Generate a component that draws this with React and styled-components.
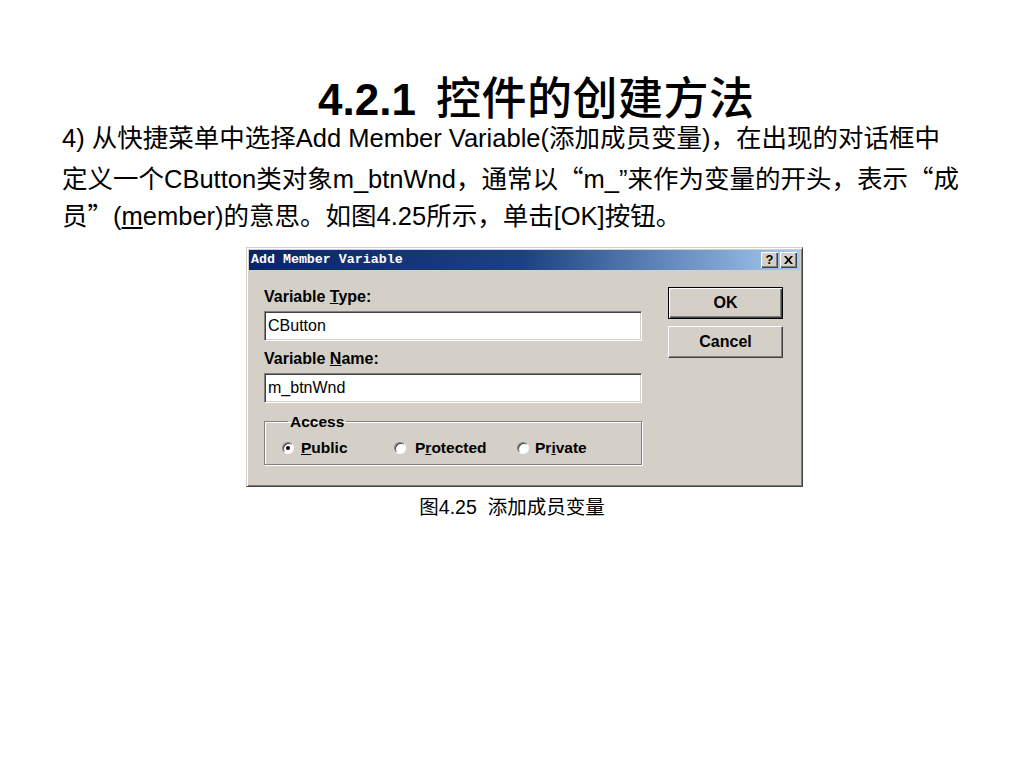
import React from 'react'
import styled, { createGlobalStyle } from 'styled-components'

const GlobalStyle = createGlobalStyle`
  html, body {
    margin: 0;
    background: #fff;
  }
  body {
    font-family: 'Liberation Sans', Arial, 'Noto Sans CJK SC', sans-serif;
    color: #000;
  }
`

const Page = styled.div`
  width: 1024px;
  height: 768px;
  padding-top: 72px;
  box-sizing: border-box;
  overflow: hidden;
`

const Title = styled.h1`
  margin: 0;
  padding-left: 318px;
  height: 48px;
  font-size: 44px;
  line-height: 48px;
  font-weight: 700;
  white-space: nowrap;
`

const TitleCjk = styled.span`
  font-family: 'Noto Sans CJK SC', sans-serif;
  font-size: 45px;
  line-height: 48px;
  font-weight: 500;
  margin-left: 20px;
  letter-spacing: 0.5px;
`

const Text = styled.div`
  padding-left: 62px;
  font-size: 25.5px;
  line-height: 37.5px;
  white-space: nowrap;
`

const Line = styled.div`
  height: 37.5px;
`

// full-width quotes, as the CJK font draws them
const Q = styled.span`
  font-family: 'Noto Sans CJK SC', sans-serif;
`

const Figure = styled.div`
  margin: 14px 0 0 246px;
  width: 557px;
`

const Window = styled.div`
  width: 557px;
  height: 240px;
  box-sizing: border-box;
  background: #d4d0c8;
  border: 1px solid;
  border-color: #d4d0c8 #404040 #404040 #d4d0c8;
  box-shadow: inset 1px 1px #fff, inset -1px -1px #808080;
  padding: 2px;
  display: flex;
  flex-direction: column;
`

const TitleBar = styled.div`
  height: 20px;
  flex-shrink: 0;
  background: linear-gradient(90deg, #0a246a 0%, #1c4283 50%, #a6caf0 100%);
  display: flex;
  align-items: center;
  justify-content: space-between;
  padding: 0 3px 0 2px;
`

const Caption = styled.span`
  font-family: 'Liberation Mono', 'DejaVu Sans Mono', monospace;
  font-weight: 700;
  font-size: 13.3px;
  color: #fff;
`

const CaptionButtons = styled.div`
  display: flex;
  gap: 2px;
`

const CapButton = styled.div`
  width: 17px;
  height: 16px;
  box-sizing: border-box;
  background: #d4d0c8;
  box-shadow: inset 1px 1px #fff, inset -1px -1px #404040, inset -2px -2px #808080;
  display: flex;
  align-items: center;
  justify-content: center;
  font: bold 13px/1 'Liberation Sans', sans-serif;
  color: #000;
`

const Body = styled.div`
  flex: 1;
  display: flex;
  gap: 26px;
  padding: 17px 0 0 15px;
`

const Form = styled.div`
  width: 378px;
  display: flex;
  flex-direction: column;
`

const Label = styled.div`
  font: bold 16px/18px 'Liberation Sans', sans-serif;
  margin-top: ${p => p.$gap || 0}px;
`

const Edit = styled.div`
  margin-top: 5px;
  height: 30px;
  box-sizing: border-box;
  background: #fff;
  border: 1px solid;
  border-color: #808080 #fff #fff #808080;
  box-shadow: inset 1px 1px #404040, inset -1px -1px #d4d0c8;
  padding-left: 3px;
  display: flex;
  align-items: center;
  font: 16px 'Liberation Sans', sans-serif;
`

const Group = styled.fieldset`
  margin: 11px 0 0;
  padding: 10px 0 8px 17px;
  min-width: 0;
  border: 1px solid #808080;
  box-shadow: 1px 1px #fff, inset 1px 1px #fff;
`

const Legend = styled.legend`
  margin-left: 6px;
  padding: 0 2px;
  font: bold 15.5px/16px 'Liberation Sans', sans-serif;
`

const RadioRow = styled.div`
  display: grid;
  grid-template-columns: 112px 123px auto;
  align-items: center;
  height: 16px;
`

const RadioItem = styled.label`
  display: flex;
  align-items: center;
  gap: ${p => p.$gap}px;
  font: bold 15.5px/16px 'Liberation Sans', sans-serif;
`

const Dot = styled.span`
  width: 12px;
  height: 12px;
  box-sizing: border-box;
  border-radius: 50%;
  background: #fff;
  border: 1px solid;
  border-color: #808080 #fff #fff #808080;
  box-shadow: inset 1px 1px #404040;
  display: flex;
  align-items: center;
  justify-content: center;

  &::after {
    content: '';
    width: 4px;
    height: 4px;
    border-radius: 50%;
    background: ${p => (p.$on ? '#000' : 'transparent')};
  }
`

const Buttons = styled.div`
  display: flex;
  flex-direction: column;
  gap: 7px;
`

const Button = styled.div`
  width: 115px;
  height: 32px;
  box-sizing: border-box;
  background: #d4d0c8;
  border: 1px solid;
  border-color: ${p => (p.$default ? '#000' : '#fff #404040 #404040 #fff')};
  box-shadow: ${p => (p.$default
    ? 'inset 1px 1px #fff, inset -1px -1px #404040, inset -2px -2px #808080'
    : 'inset -1px -1px #808080')};
  display: flex;
  align-items: center;
  justify-content: center;
  font: bold 16px 'Liberation Sans', sans-serif;
`

const FigCaption = styled.div`
  margin-top: 9px;
  text-align: center;
  font-size: 19.5px;
  line-height: 22px;
  white-space: pre;
`

const App = () => {
  return (
    <Page>
      <GlobalStyle/>
      <Title>4.2.1<TitleCjk>控件的创建方法</TitleCjk></Title>
      <Text>
        <Line>4) 从快捷菜单中选择Add Member Variable(添加成员变量)，在出现的对话框中</Line>
        <Line>定义一个CButton类对象m_btnWnd，通常以<Q>“</Q>m_”来作为变量的开头，表示<Q>“</Q>成</Line>
        <Line>员<Q>”</Q>(<u>m</u>ember)的意思。如图4.25所示，单击[OK]按钮。</Line>
      </Text>
      <Figure>
        <Window>
          <TitleBar>
            <Caption>Add Member Variable</Caption>
            <CaptionButtons>
              <CapButton>?</CapButton>
              <CapButton>
                <svg width="9" height="8" viewBox="0 0 9 8">
                  <path d="M0 0h2.2l2.3 2.8L6.8 0H9L5.7 4 9 8H6.8L4.5 5.2 2.2 8H0l3.3-4z" fill="#000"/>
                </svg>
              </CapButton>
            </CaptionButtons>
          </TitleBar>
          <Body>
            <Form>
              <Label $gap={1}>Variable <u>T</u>ype:</Label>
              <Edit>CButton</Edit>
              <Label $gap={9}>Variable <u>N</u>ame:</Label>
              <Edit>m_btnWnd</Edit>
              <Group>
                <Legend>Access</Legend>
                <RadioRow>
                  <RadioItem $gap={7}><Dot $on/><span><u>P</u>ublic</span></RadioItem>
                  <RadioItem $gap={9}><Dot/><span>P<u>r</u>otected</span></RadioItem>
                  <RadioItem $gap={6}><Dot/><span>Pr<u>i</u>vate</span></RadioItem>
                </RadioRow>
              </Group>
            </Form>
            <Buttons>
              <Button $default>OK</Button>
              <Button>Cancel</Button>
            </Buttons>
          </Body>
        </Window>
      </Figure>
      <FigCaption>图4.25  添加成员变量</FigCaption>
    </Page>
  )
}

export default App
